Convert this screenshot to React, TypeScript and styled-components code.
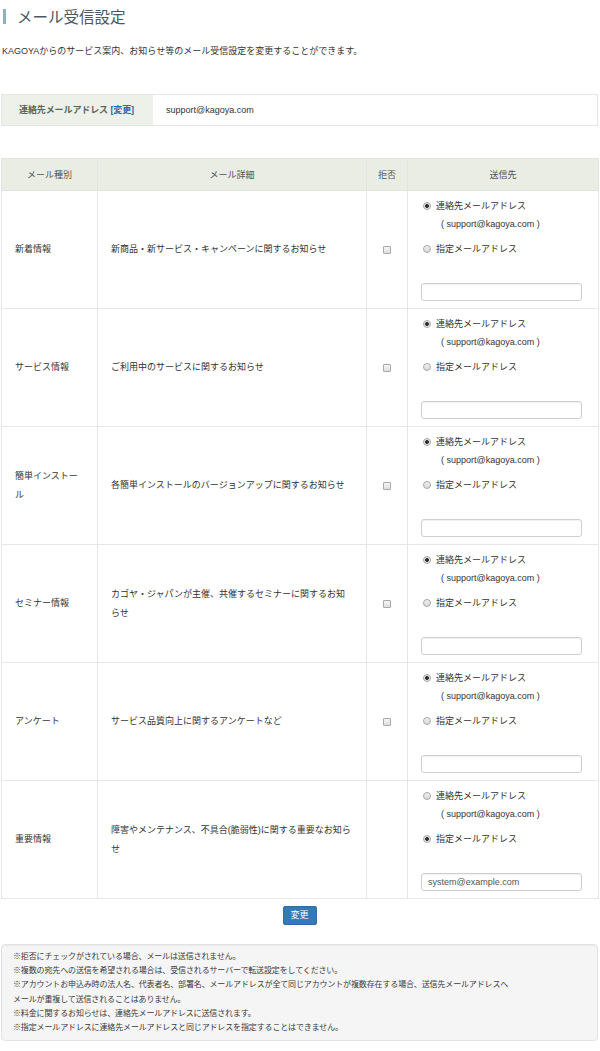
import React from "react";
import styled, { createGlobalStyle } from "styled-components";

const Global = createGlobalStyle`
  html, body {
    margin: 0;
    padding: 0;
    background: #fff;
  }
  body {
    font-family: "Liberation Sans", "Noto Sans CJK JP", sans-serif;
    font-size: 9px;
    color: #333;
  }
  * { box-sizing: border-box; }
`;

const Page = styled.div`
  width: 600px;
  padding: 0 2px 12px 1px;
`;

const Title = styled.h1`
  margin: 9px 0 0 2px;
  padding-left: 11px;
  border-left: 3px solid #8fb1b9;
  height: 15px;
  line-height: 15px;
  font-size: 15.5px;
  font-weight: 400;
  color: #4a5866;
  font-family: "Noto Sans CJK JP", sans-serif;
`;

const Intro = styled.p`
  margin: 20px 0 0 1px;
  line-height: 14px;
  color: #333;
`;

const ContactBox = styled.div`
  margin-top: 36px;
  display: flex;
  height: 32px;
  border: 1px solid #e4e6e2;
`;

const ContactLabel = styled.div`
  width: 151px;
  padding-left: 17px;
  line-height: 30px;
  background: #eef0ea;
  font-weight: 700;
  color: #56695b;
  letter-spacing: -0.1px;
`;

const ChangeLink = styled.a`
  color: #2a6aa5;
  text-decoration: none;
`;

const ContactValue = styled.div`
  padding-left: 13px;
  line-height: 30px;
  color: #333;
`;

const Table = styled.table`
  margin-top: 32px;
  width: 597px;
  border-collapse: collapse;
  table-layout: fixed;
`;

const Th = styled.th`
  height: 32px;
  padding: 0;
  background: #e9ede4;
  border: 1px solid #e2e5de;
  font-weight: 400;
  color: #555;
  text-align: center;
`;

const Td = styled.td<{ $center?: boolean }>`
  border: 1px solid #e6e6e6;
  padding: 0 14px 0 13px;
  vertical-align: middle;
  line-height: 19px;
  color: #333;
  text-align: ${(p) => (p.$center ? "center" : "left")};
`;

const DestCell = styled.td`
  border: 1px solid #e6e6e6;
  padding: 5px 16px 7px 13px;
  vertical-align: top;
`;

const Option = styled.label<{ $gap?: number }>`
  display: flex;
  align-items: center;
  gap: 5px;
  height: 19px;
  padding-left: 2px;
  margin-top: ${(p) => p.$gap ?? 0}px;
  color: #333;
`;

const Radio = styled.span<{ $on?: boolean }>`
  display: inline-block;
  width: 8px;
  height: 8px;
  border-radius: 50%;
  border: 1px solid #a8a8a8;
  background: ${(p) =>
    p.$on
      ? "radial-gradient(circle, #333 0 1.6px, #e6e6e6 2.2px)"
      : "linear-gradient(#f2f2f2, #d8d8d8)"};
`;

const SubAddress = styled.div`
  height: 19px;
  line-height: 19px;
  padding-left: 20px;
  color: #333;
`;

const AddressInput = styled.div`
  margin-top: 25px;
  height: 18px;
  border: 1px solid #cfcfcf;
  border-radius: 3px;
  box-shadow: inset 0 1px 1px rgba(0, 0, 0, 0.06);
  padding-left: 6px;
  line-height: 16px;
  color: #555;
  background: #fff;
`;

const Check = styled.span`
  display: inline-block;
  width: 8px;
  height: 8px;
  vertical-align: middle;
  border: 1px solid #a9a9a9;
  border-radius: 1px;
  background: linear-gradient(#f5f5f5, #dedede);
`;

const Actions = styled.div`
  display: flex;
  justify-content: center;
  margin-top: 7px;
`;

const Button = styled.button`
  width: 34px;
  height: 19px;
  padding: 0;
  border: 1px solid #2e6da4;
  border-radius: 2px;
  background: #337ab7;
  color: #fff;
  font-family: "Liberation Sans", "Noto Sans CJK JP", sans-serif;
  font-size: 9px;
  line-height: 17px;
`;

const Notes = styled.div`
  margin-top: 19px;
  padding: 5px 11px 5px 11px;
  background: #f5f5f5;
  border: 1px solid #e3e3e3;
  border-radius: 4px;
  box-shadow: inset 0 1px 1px rgba(0, 0, 0, 0.05);
  font-size: 8px;
  line-height: 14.2px;
  letter-spacing: -0.14px;
  color: #3a3a3a;
`;

const NoteLine = styled.div`
  white-space: nowrap;
`;

type Row = {
  kind: string;
  detail: string;
  refusable: boolean;
  custom?: string;
};

const rows: Row[] = [
  { kind: "新着情報", detail: "新商品・新サービス・キャンペーンに関するお知らせ", refusable: true },
  { kind: "サービス情報", detail: "ご利用中のサービスに関するお知らせ", refusable: true },
  { kind: "簡単インストール", detail: "各簡単インストールのバージョンアップに関するお知らせ", refusable: true },
  { kind: "セミナー情報", detail: "カゴヤ・ジャパンが主催、共催するセミナーに関するお知らせ", refusable: true },
  { kind: "アンケート", detail: "サービス品質向上に関するアンケートなど", refusable: true },
  {
    kind: "重要情報",
    detail: "障害やメンテナンス、不具合(脆弱性)に関する重要なお知らせ",
    refusable: false,
    custom: "system@example.com",
  },
];

const notes = [
  "※拒否にチェックがされている場合、メールは送信されません。",
  "※複数の宛先への送信を希望される場合は、受信されるサーバーで転送設定をしてください。",
  "※アカウントお申込み時の法人名、代表者名、部署名、メールアドレスが全て同じアカウントが複数存在する場合、送信先メールアドレスへ",
  "メールが重複して送信されることはありません。",
  "※料金に関するお知らせは、連絡先メールアドレスに送信されます。",
  "※指定メールアドレスに連絡先メールアドレスと同じアドレスを指定することはできません。",
];

export default function App() {
  return (
    <Page>
      <Global />
      <Title>メール受信設定</Title>
      <Intro>KAGOYAからのサービス案内、お知らせ等のメール受信設定を変更することができます。</Intro>

      <ContactBox>
        <ContactLabel>
          連絡先メールアドレス <ChangeLink href="#">[変更]</ChangeLink>
        </ContactLabel>
        <ContactValue>support@kagoya.com</ContactValue>
      </ContactBox>

      <Table>
        <colgroup>
          <col style={{ width: 96 }} />
          <col style={{ width: 269 }} />
          <col style={{ width: 41 }} />
          <col style={{ width: 191 }} />
        </colgroup>
        <thead>
          <tr>
            <Th>メール種別</Th>
            <Th>メール詳細</Th>
            <Th>拒否</Th>
            <Th>送信先</Th>
          </tr>
        </thead>
        <tbody>
          {rows.map((r) => (
            <tr key={r.kind}>
              <Td>{r.kind}</Td>
              <Td>{r.detail}</Td>
              <Td $center>{r.refusable && <Check />}</Td>
              <DestCell>
                <Option>
                  <Radio $on={!r.custom} />
                  連絡先メールアドレス
                </Option>
                <SubAddress>( support@kagoya.com )</SubAddress>
                <Option $gap={5}>
                  <Radio $on={!!r.custom} />
                  指定メールアドレス
                </Option>
                <AddressInput>{r.custom ?? ""}</AddressInput>
              </DestCell>
            </tr>
          ))}
        </tbody>
      </Table>

      <Actions>
        <Button>変更</Button>
      </Actions>

      <Notes>
        {notes.map((n) => (
          <NoteLine key={n}>{n}</NoteLine>
        ))}
      </Notes>
    </Page>
  );
}
